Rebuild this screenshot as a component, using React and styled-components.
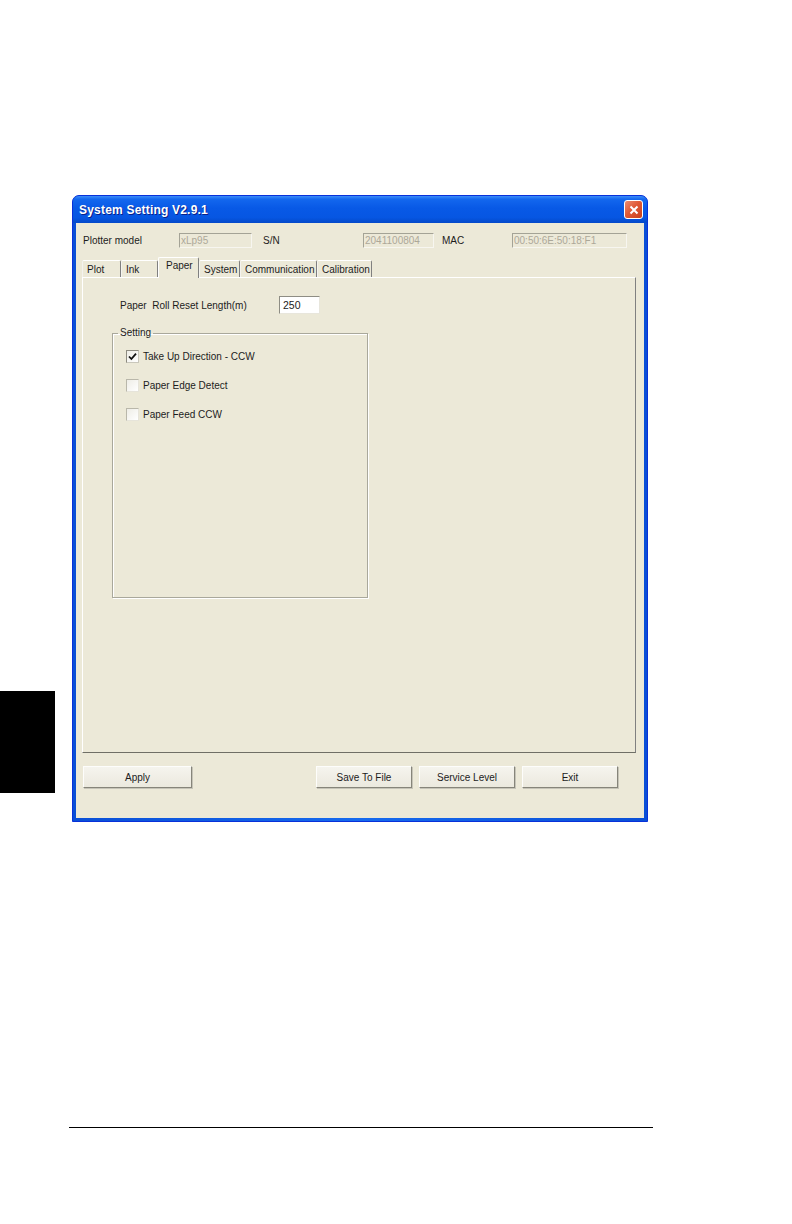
import React from "react";
import styled, { createGlobalStyle } from "styled-components";

const GlobalStyle = createGlobalStyle`
  html, body {
    margin: 0;
    padding: 0;
    background: #fff;
  }
  body {
    font-family: "Liberation Sans", Arial, sans-serif;
  }
`;

const Page = styled.div`
  width: 792px;
  min-height: 1224px;
  background: #fff;
`;

const MainRow = styled.div`
  display: flex;
  padding-top: 195px;
`;

const SideCol = styled.div`
  width: 72px;
  flex-shrink: 0;
`;

const ThumbTab = styled.div`
  width: 55px;
  height: 102px;
  margin-top: 496px;
  background: #000;
`;

const Window = styled.div`
  width: 576px;
  box-sizing: border-box;
  border: 1px solid #0831d9;
  border-radius: 7px 7px 0 0;
  overflow: hidden;
  background: #0a54dc;
`;

const TitleBar = styled.div`
  height: 27px;
  display: flex;
  align-items: center;
  justify-content: space-between;
  padding: 0 4px 0 6px;
  background: linear-gradient(
    to bottom,
    #3b8cf9 0%,
    #1367ee 12%,
    #0859e6 45%,
    #0656e2 80%,
    #0449c9 100%
  );
`;

const Title = styled.span`
  color: #fff;
  font-weight: bold;
  font-size: 12px;
  letter-spacing: 0.2px;
  text-shadow: 1px 1px 0 #0a1f8a;
`;

const CloseButton = styled.div`
  width: 19px;
  height: 19px;
  box-sizing: border-box;
  border: 1px solid #fff;
  border-radius: 3px;
  background: linear-gradient(135deg, #ec8d72 0%, #e05a36 45%, #c8401c 100%);
  display: flex;
  align-items: center;
  justify-content: center;
`;

const Frame = styled.div`
  padding: 0 3px 3px;
  background: linear-gradient(to right, #0a4fd6, #166aee 50%, #0a4fd6);
`;

const Body = styled.div`
  background: #ece9d8;
  padding: 10px 0 30px;
  font-size: 10px;
  color: #1c1c1c;
`;

const InfoRow = styled.div`
  display: flex;
  align-items: center;
  height: 15px;
  padding-left: 7px;
`;

const Label = styled.span`
  width: ${(p) => p.$w}px;
  padding-left: ${(p) => p.$pad || 0}px;
  box-sizing: border-box;
  flex-shrink: 0;
  white-space: nowrap;
`;

const Field = styled.div`
  width: ${(p) => p.$w}px;
  height: 15px;
  box-sizing: border-box;
  flex-shrink: 0;
  border: 1px solid;
  border-color: #a4a396 #f7f6f0 #f7f6f0 #a4a396;
  color: #aca899;
  line-height: 13px;
  padding-left: 1px;
  overflow: hidden;
  white-space: nowrap;
`;

const TabRow = styled.div`
  display: flex;
  align-items: flex-end;
  height: 20px;
  margin: 9px 0 0 6px;
  position: relative;
  z-index: 1;
`;

const Tab = styled.div`
  width: ${(p) => p.$w}px;
  height: ${(p) => (p.$active ? 21 : 17)}px;
  box-sizing: border-box;
  padding: ${(p) => (p.$active ? "1px 0 0 7px" : "2px 0 0 4px")};
  line-height: 14px;
  border-top: 1px solid #fff;
  border-left: 1px solid ${(p) => (p.$active ? "#fff" : "#f4f3ee")};
  border-right: 1px solid #808080;
  border-radius: 2px 2px 0 0;
  background: #ece9d8;
  margin-bottom: ${(p) => (p.$active ? -1 : 0)}px;
  white-space: nowrap;
`;

const Panel = styled.div`
  height: 476px;
  margin: 0 8px 0 6px;
  box-sizing: border-box;
  border: 1px solid;
  border-color: #fff #808080 #6f6f66 #fff;
  padding: 18px 0 0 29px;
`;

const LengthRow = styled.div`
  display: flex;
  align-items: center;
  height: 18px;
  margin-left: 8px;
`;

const NumberInput = styled.div`
  width: 41px;
  height: 18px;
  box-sizing: border-box;
  border: 1px solid;
  border-color: #8e8d84 #e8e6dc #e8e6dc #8e8d84;
  background: #fff;
  line-height: 16px;
  padding-left: 3px;
  font-size: 10.5px;
`;

const Group = styled.fieldset`
  width: 256px;
  box-sizing: border-box;
  margin: 13px 0 0 0;
  padding: 0;
  min-width: 0;
  border: 1px solid #a9a89b;
  box-shadow: inset 1px 1px 0 #fff, 1px 1px 0 #fff;
`;

const Legend = styled.legend`
  margin-left: 5px;
  padding: 0 2px;
  line-height: 12px;
`;

const CheckList = styled.div`
  height: 258px;
  box-sizing: border-box;
  padding: 11px 0 0 13px;
  display: flex;
  flex-direction: column;
  gap: 16px;
`;

const CheckRow = styled.div`
  display: flex;
  align-items: center;
  height: 13px;
`;

const Box = styled.div`
  width: 13px;
  height: 13px;
  box-sizing: border-box;
  border: 1px solid;
  border-color: ${(p) =>
    p.$checked ? "#8d8b80 #c9c7bb #c9c7bb #8d8b80" : "#b9b7aa #e6e4da #e6e4da #b9b7aa"};
  background: linear-gradient(135deg, #eeede6, #fff);
  display: flex;
  align-items: center;
  justify-content: center;
  flex-shrink: 0;
`;

const CheckText = styled.span`
  margin-left: 4px;
  white-space: nowrap;
`;

const ButtonRow = styled.div`
  display: flex;
  justify-content: space-between;
  margin-top: 13px;
  padding: 0 26px 0 7px;
`;

const ButtonGroup = styled.div`
  display: flex;
  gap: 7px;
`;

const Button = styled.div`
  width: ${(p) => p.$w}px;
  height: 22px;
  box-sizing: border-box;
  border: 1px solid;
  border-color: #fdfdfb #86857a #86857a #fdfdfb;
  box-shadow: 1px 1px 0 #c6c4b8;
  background: linear-gradient(to bottom, #f5f4ee, #ebe9de);
  display: flex;
  align-items: center;
  justify-content: center;
  white-space: nowrap;
`;

const Rule = styled.div`
  width: 584px;
  margin: 305px 0 0 69px;
  border-top: 1px solid #000;
`;

function CheckItem({ checked, children }) {
  return (
    <CheckRow>
      <Box $checked={checked}>
        {checked && (
          <svg width="9" height="9" viewBox="0 0 9 9">
            <path d="M1 4.5 L3.4 7 L8 1.6" fill="none" stroke="#111" strokeWidth="1.8" />
          </svg>
        )}
      </Box>
      <CheckText>{children}</CheckText>
    </CheckRow>
  );
}

const tabs = [
  { name: "Plot", w: 39 },
  { name: "Ink", w: 37 },
  { name: "Paper", w: 41, active: true },
  { name: "System", w: 41 },
  { name: "Communication", w: 77 },
  { name: "Calibration", w: 55 },
];

export default function App() {
  return (
    <Page>
      <GlobalStyle />
      <MainRow>
        <SideCol>
          <ThumbTab />
        </SideCol>
        <Window>
          <TitleBar>
            <Title>System Setting V2.9.1</Title>
            <CloseButton>
              <svg width="10" height="10" viewBox="0 0 10 10">
                <path d="M1.5 1.5 L8.5 8.5 M8.5 1.5 L1.5 8.5" stroke="#fff" strokeWidth="2" />
              </svg>
            </CloseButton>
          </TitleBar>
          <Frame>
            <Body>
              <InfoRow>
                <Label $w={96}>Plotter model</Label>
                <Field $w={73}>xLp95</Field>
                <Label $w={111} $pad={11}>S/N</Label>
                <Field $w={71}>2041100804</Field>
                <Label $w={78} $pad={8}>MAC</Label>
                <Field $w={115}>00:50:6E:50:18:F1</Field>
              </InfoRow>
              <TabRow>
                {tabs.map((t) => (
                  <Tab key={t.name} $w={t.w} $active={t.active}>
                    {t.name}
                  </Tab>
                ))}
              </TabRow>
              <Panel>
                <LengthRow>
                  <Label $w={159}>Paper&nbsp; Roll Reset Length(m)</Label>
                  <NumberInput>250</NumberInput>
                </LengthRow>
                <Group>
                  <Legend>Setting</Legend>
                  <CheckList>
                    <CheckItem checked>Take Up Direction - CCW</CheckItem>
                    <CheckItem>Paper Edge Detect</CheckItem>
                    <CheckItem>Paper Feed CCW</CheckItem>
                  </CheckList>
                </Group>
              </Panel>
              <ButtonRow>
                <Button $w={109}>Apply</Button>
                <ButtonGroup>
                  <Button $w={96}>Save To File</Button>
                  <Button $w={96}>Service Level</Button>
                  <Button $w={96}>Exit</Button>
                </ButtonGroup>
              </ButtonRow>
            </Body>
          </Frame>
        </Window>
      </MainRow>
      <Rule />
    </Page>
  );
}
